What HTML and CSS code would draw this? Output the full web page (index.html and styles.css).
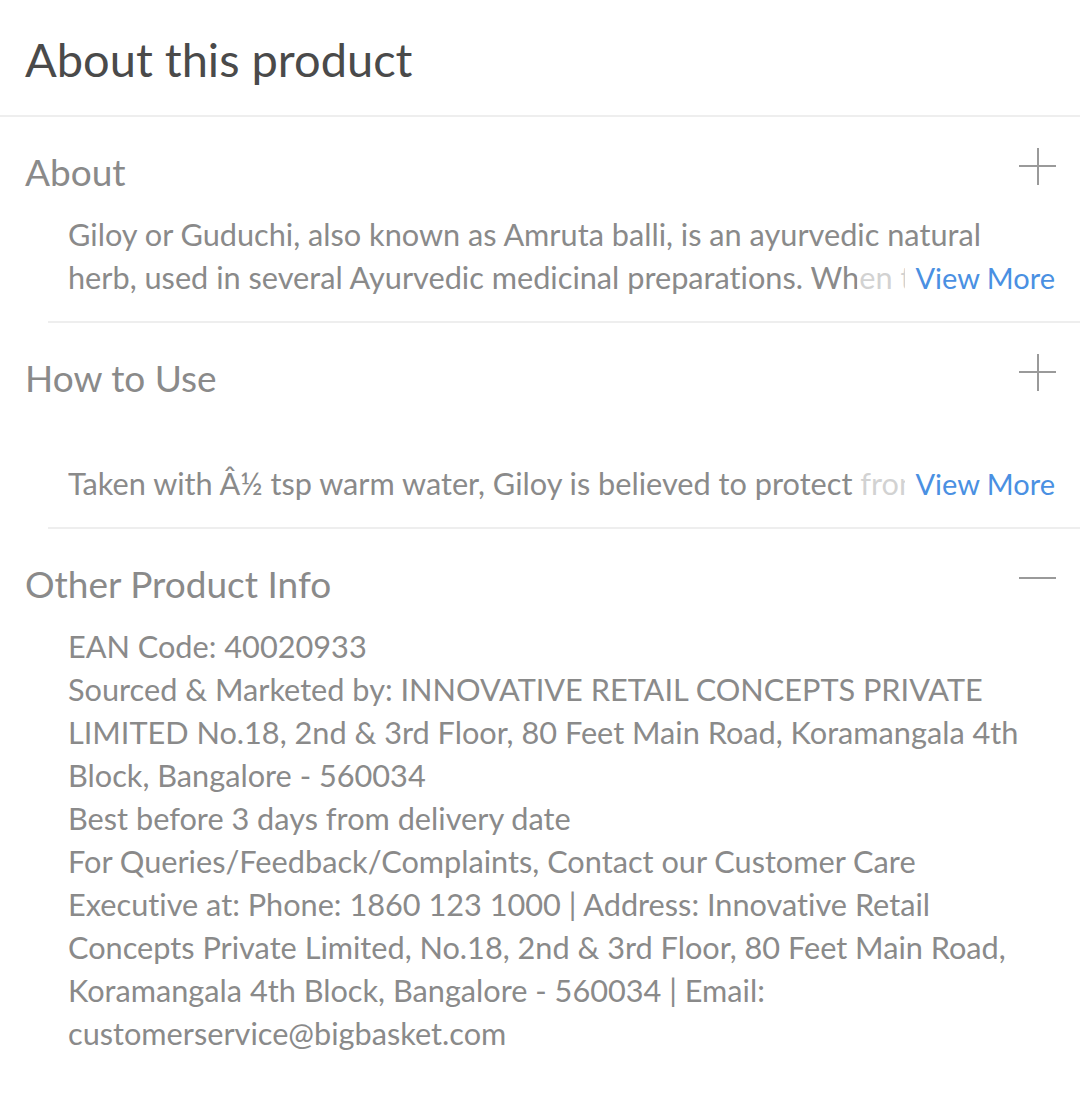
FILE: index.html
```html
<!DOCTYPE html>
<html lang="en">
<head>
<meta charset="utf-8">
<title>About this product</title>
<link rel="stylesheet" href="styles.css">
</head>
<body>
<main class="page">
  <header class="page-head">
    <h1 class="page-title">About this product</h1>
  </header>

  <section class="acc">
    <div class="acc-head">
      <h2 class="acc-title">About</h2>
      <span class="acc-icon plus"></span>
    </div>
    <div class="acc-body clamp">
      <p class="clamp-text">Giloy or Guduchi, also known as Amruta balli, is an ayurvedic natural herb, used in several Ayurvedic medicinal preparations. When taken regularly, it is believed to help boost immunity and improve overall health.</p>
      <span class="view-more">View More</span>
    </div>
  </section>

  <section class="acc">
    <div class="acc-head">
      <h2 class="acc-title">How to Use</h2>
      <span class="acc-icon plus"></span>
    </div>
    <div class="acc-body clamp">
      <p class="clamp-text"><br>Taken with Â½ tsp warm water, Giloy is believed to protect from infections and helps in boosting immunity.</p>
      <span class="view-more">View More</span>
    </div>
  </section>

  <section class="acc open">
    <div class="acc-head">
      <h2 class="acc-title">Other Product Info</h2>
      <span class="acc-icon minus"></span>
    </div>
    <div class="acc-body">
      <p class="info">EAN Code: 40020933<br>
      Sourced &amp; Marketed by: INNOVATIVE RETAIL CONCEPTS PRIVATE LIMITED No.18, 2nd &amp; 3rd Floor, 80 Feet Main Road, Koramangala 4th Block, Bangalore - 560034<br>
      Best before 3 days from delivery date<br>
      For Queries/Feedback/Complaints, Contact our Customer Care Executive at: Phone: 1860 123 1000 | Address: Innovative Retail Concepts Private Limited, No.18, 2nd &amp; 3rd Floor, 80 Feet Main Road, Koramangala 4th Block, Bangalore - 560034 | Email: customerservice@bigbasket.com</p>
    </div>
  </section>
</main>
</body>
</html>
```

FILE: styles.css
```css
* { box-sizing: border-box; }

html, body {
  margin: 0;
  padding: 0;
  background: #fff;
}

body {
  font-family: Lato, "Noto Sans", "Liberation Sans", sans-serif;
  font-variant-ligatures: none;
  color: #8a8a8a;
}

.page {
  width: 1080px;
}

.page-head {
  height: 117px;
  padding: 27px 25px 0;
  border-bottom: 2px solid #eeeeee;
}

.page-title {
  margin: 0;
  font-size: 47px;
  line-height: 64px;
  font-weight: 400;
  color: #4a4a4a;
}

.acc {
  padding-left: 48px;
}

.acc-head {
  display: flex;
  align-items: center;
  justify-content: space-between;
  height: 50px;
  margin-top: 30px;
  margin-left: -23px;
  padding-right: 24px;
}

.acc-title {
  margin: 0;
  font-size: 37px;
  line-height: 50px;
  font-weight: 400;
  color: #8a8a8a;
}

.acc-icon {
  position: relative;
  width: 37px;
  height: 37px;
  margin-top: -12px;
}

.acc-icon::before,
.acc-icon::after {
  content: "";
  position: absolute;
  background: #9a9a9a;
}

.acc-icon::before {
  left: 0;
  right: 0;
  top: 17px;
  height: 2px;
}

.plus::after {
  top: 0;
  bottom: 0;
  left: 18px;
  width: 2px;
}

.minus::after { display: none; }

.acc-body {
  margin: 16px 0 0;
  padding: 0 25px 22px 20px;
  border-bottom: 2px solid #eeeeee;
}

.acc.open .acc-body {
  border-bottom: 0;
}

.clamp {
  position: relative;
}

.clamp-text,
.info {
  margin: 0;
  font-size: 30.7px;
  line-height: 43px;
  color: #8a8a8a;
}

.info {
  max-width: 962px;
}

.clamp-text {
  height: 86px;
  overflow: hidden;
}

.view-more {
  position: absolute;
  right: 25px;
  bottom: 22px;
  height: 43px;
  line-height: 43px;
  font-size: 29px;
  color: #4a90e2;
  padding-left: 58px;
  background: linear-gradient(to right, rgba(255,255,255,0.62) 48px, #ffffff 48px);
}
```
